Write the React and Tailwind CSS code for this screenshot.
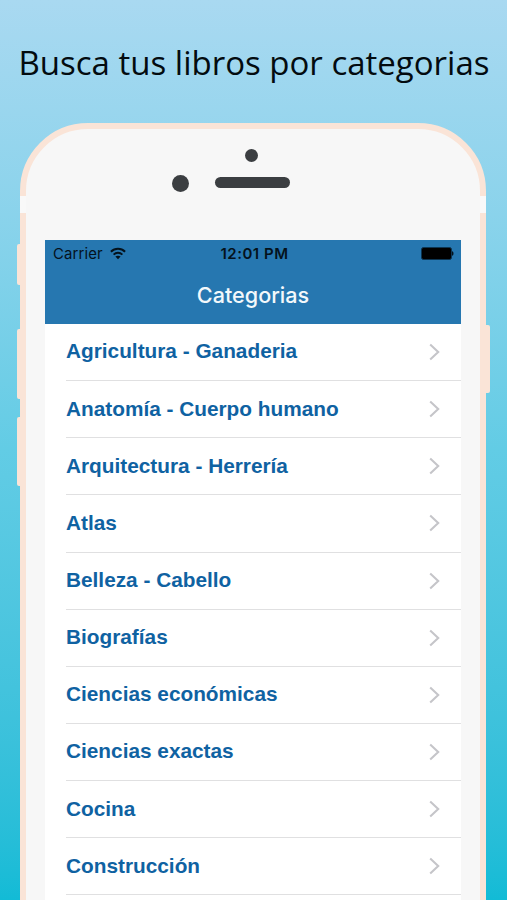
const categories = [
  "Agricultura - Ganaderia",
  "Anatomía - Cuerpo humano",
  "Arquitectura - Herrería",
  "Atlas",
  "Belleza - Cabello",
  "Biografías",
  "Ciencias económicas",
  "Ciencias exactas",
  "Cocina",
  "Construcción",
];

function Wifi() {
  return (
    <svg className="ml-[7px] h-[13px] w-[16px]" viewBox="0 0 16 13" fill="none" stroke="#04121c">
      <path d="M.9 4.7C4.9.8 11.1.8 15.1 4.7" strokeWidth="2" />
      <path d="M3.6 7.6C6.1 5.2 9.9 5.2 12.4 7.6" strokeWidth="1.9" />
      <path d="M8 12.2 5.4 9.6C6.8 8.3 9.2 8.3 10.6 9.6Z" fill="#04121c" stroke="none" />
    </svg>
  );
}

function StatusBar() {
  return (
    <div className="grid h-[27px] grid-cols-3 items-center pr-[7px] pl-2 text-[#04121c]">
      <div className="flex items-center pt-px font-['Inter',sans-serif] text-[14.9px] tracking-[0.15px]">
        Carrier
        <Wifi />
      </div>
      <div className="pt-px pl-0.5 text-center font-['Inter',sans-serif] text-[15px] font-semibold whitespace-nowrap tracking-[0.5px]">
        12:01 PM
      </div>
      <svg className="h-[13px] w-[33px] justify-self-end" viewBox="0 0 33 13">
        <rect x=".5" y=".5" width="30" height="12" rx="2" fill="#000" stroke="#0c3552" />
        <path d="M31 4.2C33 4.5 33 8.5 31 8.8Z" fill="#04121c" />
      </svg>
    </div>
  );
}

function Row({ name }) {
  return (
    <li className="ml-[21px] flex h-[57.15px] shrink-0 items-center justify-between border-b-[1.5px] border-[#e0e0e1] pr-[21px]">
      <span className="pb-0.5 whitespace-nowrap">{name}</span>
      <svg className="h-[18px] w-[11px]" viewBox="0 0 11 18" fill="none" stroke="#c5c5c9" strokeWidth="2.1">
        <path d="M1.2 1.5 9.2 9 1.2 16.5" />
      </svg>
    </li>
  );
}

function Bezel() {
  return (
    <div className="flex h-[111px] flex-col pt-5">
      <div className="ml-[200px] size-[13px] rounded-full bg-[#3b3e41]" />
      <div className="mt-[13px] ml-[127px] flex items-start gap-[26px]">
        <div className="size-[17px] rounded-full bg-[#3b3e41]" />
        <div className="mt-[2px] h-[11px] w-[75px] rounded-full bg-[#3b3e41]" />
      </div>
    </div>
  );
}

export default function App() {
  return (
    <main className="flex h-[900px] w-[507px] flex-col overflow-hidden bg-linear-to-b from-[#a9d9f1] via-[#62cce5] via-50% to-[#12bbd6]">
      <h1 className="flex h-[123px] shrink-0 items-center justify-center pt-0.5 pl-px font-['Open_Sans',sans-serif] text-[33px] whitespace-nowrap text-[#030b0f]">
        Busca tus libros por categorias
      </h1>
      <div className="flex min-h-0 flex-1 items-start pl-[17px]">
        <div className="flex w-[3px] flex-col pt-[121px]">
          <div className="h-[41px] rounded-l-[2px] bg-[#fae4d7]" />
          <div className="mt-11 h-[70px] rounded-l-[2px] bg-[#fae4d7]" />
          <div className="mt-[18px] h-[69px] rounded-l-[2px] bg-[#fae4d7]" />
        </div>
        <section className="relative h-[850px] w-[466px] shrink-0 rounded-t-[68px] border-6 border-[#fae4d7] bg-[#f7f7f7] px-[19px]">
          <div className="absolute -inset-x-1.5 top-[67px] flex h-[17px] justify-between">
            <div className="w-1.5 bg-[#f9f9f9]" />
            <div className="w-1.5 bg-[#f9f9f9]" />
          </div>
          <Bezel />
          <div className="w-[416px] bg-white">
            <header className="h-[84px] bg-[#2677b0]">
              <StatusBar />
              <h2 className="flex h-[57px] items-center justify-center font-['Inter',sans-serif] text-[21.6px] font-medium text-[#f3f8fb]">
                Categorias
              </h2>
            </header>
            <ul className="flex h-[600px] flex-col font-['Liberation_Sans',Arial,sans-serif] text-[20.8px] font-bold text-[#0f62a2]">
              {categories.map((name) => (
                <Row key={name} name={name} />
              ))}
            </ul>
          </div>
        </section>
        <div className="mt-[202px] h-[68px] w-1 rounded-r-[2px] bg-[#fae4d7]" />
      </div>
    </main>
  );
}
